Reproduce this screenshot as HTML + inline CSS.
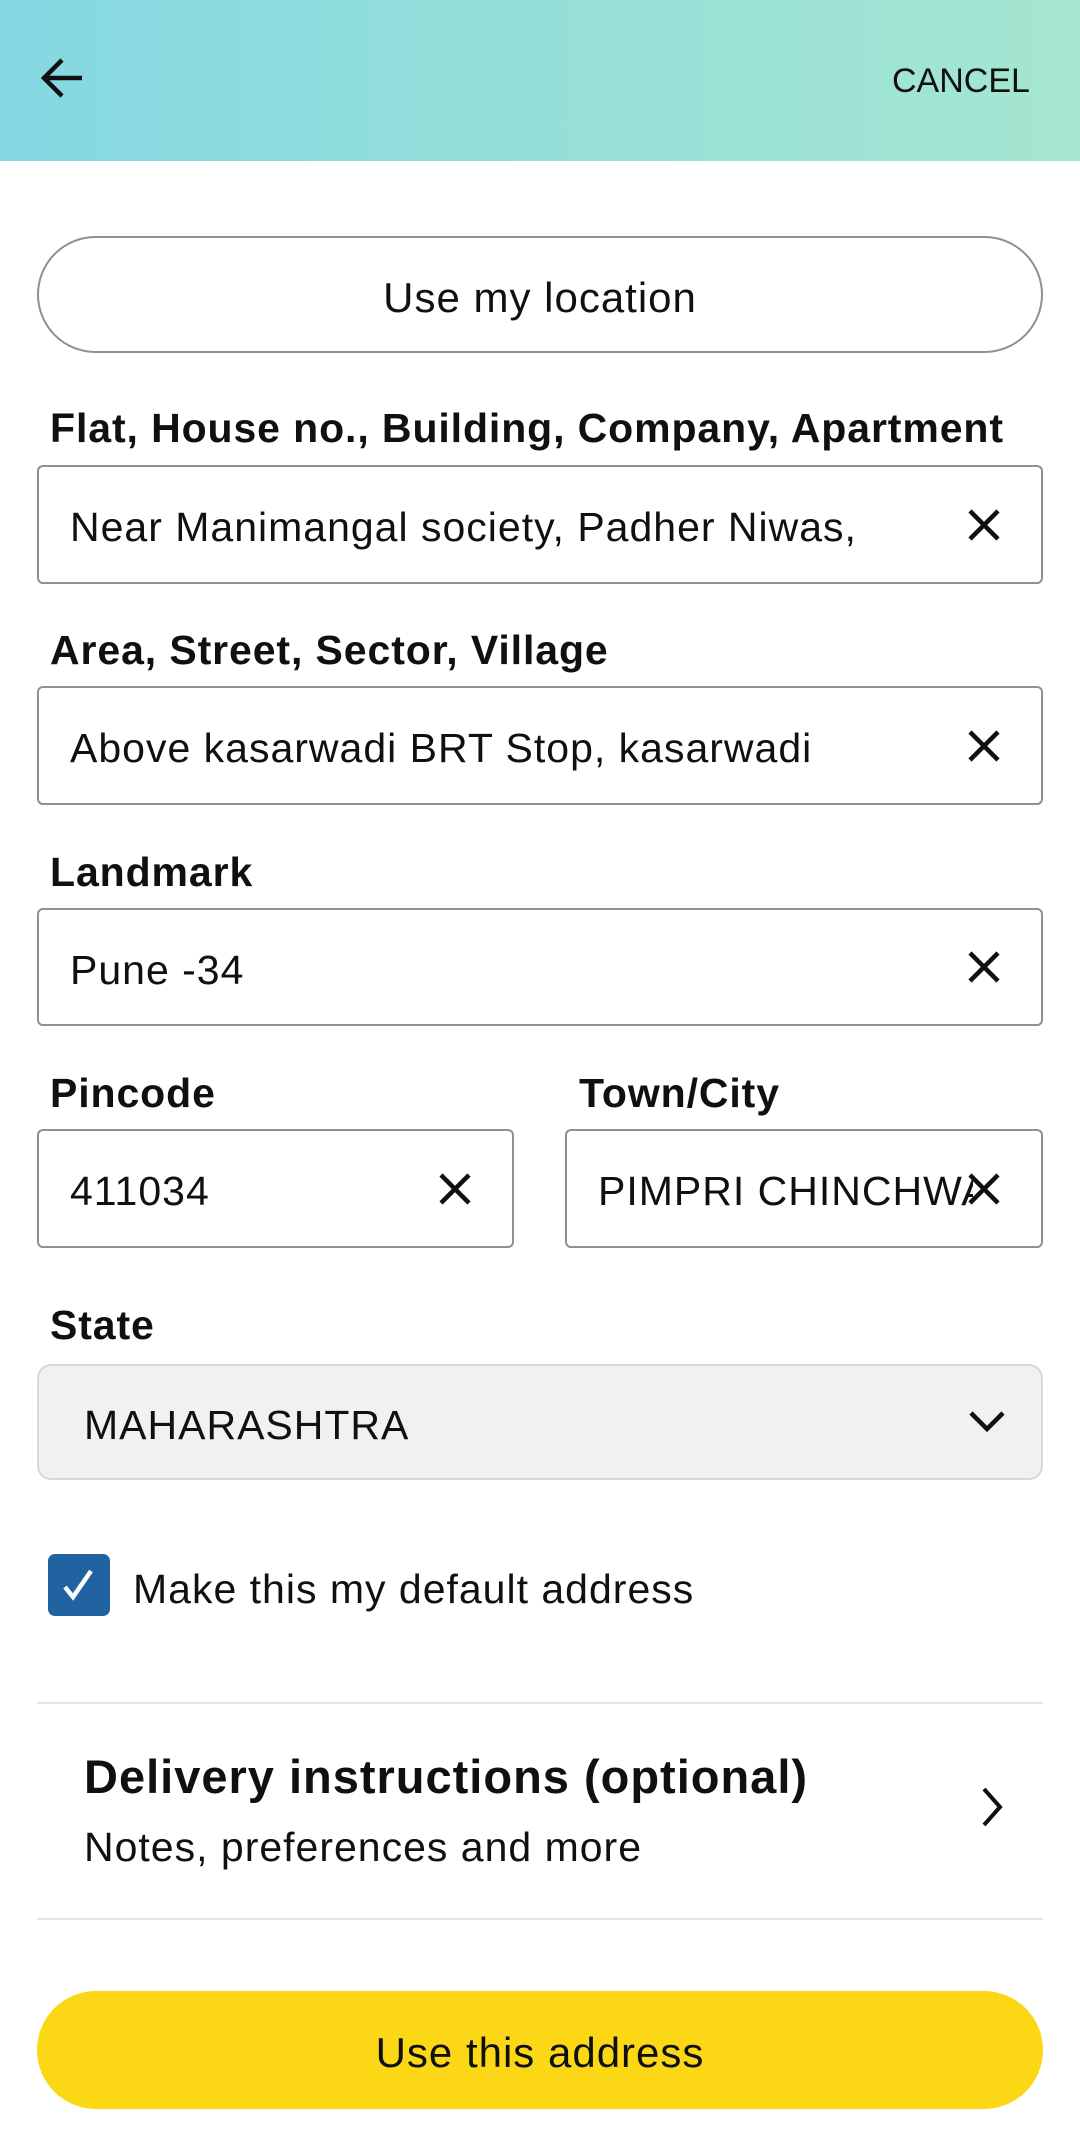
<!DOCTYPE html>
<html><head><meta charset="utf-8"><style>
*{margin:0;padding:0;box-sizing:border-box}
body{width:1080px;height:2151px;background:#fff;font-family:"Liberation Sans",sans-serif;color:#0f1111;position:relative;overflow:hidden}
.hdr{position:absolute;left:0;top:0;width:1080px;height:161px;background:linear-gradient(90deg,#84d8e2,#a5e6d0)}
.abs{position:absolute}
.lbl{position:absolute;left:50px;font-weight:bold;font-size:41px;letter-spacing:0.9px}
.inp{position:absolute;border:2px solid #8d9096;border-radius:6px;background:#fff;font-size:41px;letter-spacing:1px;display:flex;align-items:center;padding-left:31px;padding-top:6px;white-space:nowrap;overflow:hidden}
.x{position:absolute;right:40px;top:50%;margin-top:-17px}
</style></head><body>
<div class="hdr"></div>
<svg class="abs" style="left:38px;top:56px" width="48" height="44" viewBox="0 0 48 44"><path d="M44 22H6M24 4L6 22l18 18" stroke="#0f1111" stroke-width="4.5" fill="none"/></svg>
<div class="abs" style="left:892px;top:62px;font-size:34px">CANCEL</div>
<div class="abs" style="left:37px;top:236px;width:1006px;height:117px;border:2px solid #8d9096;border-radius:59px;display:flex;align-items:center;justify-content:center;font-size:42px;letter-spacing:1px;padding-top:6px">Use my location</div>

<div class="lbl" style="top:405px">Flat, House no., Building, Company, Apartment</div>
<div class="inp" style="left:37px;top:465px;width:1006px;height:119px">Near Manimangal society, Padher Niwas,<svg class="x" width="34" height="34"><path d="M3 3L31 31M31 3L3 31" stroke="#0f1111" stroke-width="4.5"/></svg></div>

<div class="lbl" style="top:627px">Area, Street, Sector, Village</div>
<div class="inp" style="left:37px;top:686px;width:1006px;height:119px">Above kasarwadi BRT Stop, kasarwadi<svg class="x" width="34" height="34"><path d="M3 3L31 31M31 3L3 31" stroke="#0f1111" stroke-width="4.5"/></svg></div>

<div class="lbl" style="top:849px">Landmark</div>
<div class="inp" style="left:37px;top:908px;width:1006px;height:118px">Pune -34<svg class="x" width="34" height="34"><path d="M3 3L31 31M31 3L3 31" stroke="#0f1111" stroke-width="4.5"/></svg></div>

<div class="lbl" style="top:1070px">Pincode</div>
<div class="lbl" style="top:1070px;left:579px">Town/City</div>
<div class="inp" style="left:37px;top:1129px;width:477px;height:119px">411034<svg class="x" width="34" height="34"><path d="M3 3L31 31M31 3L3 31" stroke="#0f1111" stroke-width="4.5"/></svg></div>
<div class="inp" style="left:565px;top:1129px;width:478px;height:119px"><span style="display:inline-block;width:375px;overflow:hidden">PIMPRI CHINCHWAD</span><svg class="x" style="right:40px" width="34" height="34"><path d="M3 3L31 31M31 3L3 31" stroke="#0f1111" stroke-width="4.5"/></svg></div>

<div class="lbl" style="top:1302px">State</div>
<div class="abs" style="left:37px;top:1364px;width:1006px;height:116px;border:2px solid #d5d9d9;border-radius:14px;background:#f0f2f2;font-size:41px;letter-spacing:1px;display:flex;align-items:center;padding-left:45px;padding-top:6px">MAHARASHTRA</div>
<svg class="abs" style="left:968px;top:1410px" width="38" height="24"><path d="M3 3L19 19L35 3" stroke="#0f1111" stroke-width="4.5" fill="none"/></svg>

<div class="abs" style="left:48px;top:1554px;width:62px;height:62px;background:#2162a1;border-radius:7px"></div>
<svg class="abs" style="left:58px;top:1566px" width="42" height="38"><path d="M7 21L15 31L33 5" stroke="#fff" stroke-width="4.5" fill="none"/></svg>
<div class="abs" style="left:133px;top:1566px;font-size:41px;letter-spacing:1px">Make this my default address</div>

<div class="abs" style="left:37px;top:1702px;width:1006px;height:2px;background:#e3e6e6"></div>
<div class="abs" style="left:84px;top:1749px;font-size:47px;font-weight:bold;letter-spacing:1px">Delivery instructions (optional)</div>
<div class="abs" style="left:84px;top:1824px;font-size:41px;letter-spacing:1px">Notes, preferences and more</div>
<svg class="abs" style="left:980px;top:1786px" width="24" height="42"><path d="M4 3L20 21L4 39" stroke="#0f1111" stroke-width="4" fill="none"/></svg>
<div class="abs" style="left:37px;top:1918px;width:1006px;height:2px;background:#e3e6e6"></div>

<div class="abs" style="left:37px;top:1991px;width:1006px;height:118px;background:#fcd716;border-radius:59px;display:flex;align-items:center;justify-content:center;font-size:42px;letter-spacing:1px;padding-top:6px">Use this address</div>
</body></html>
